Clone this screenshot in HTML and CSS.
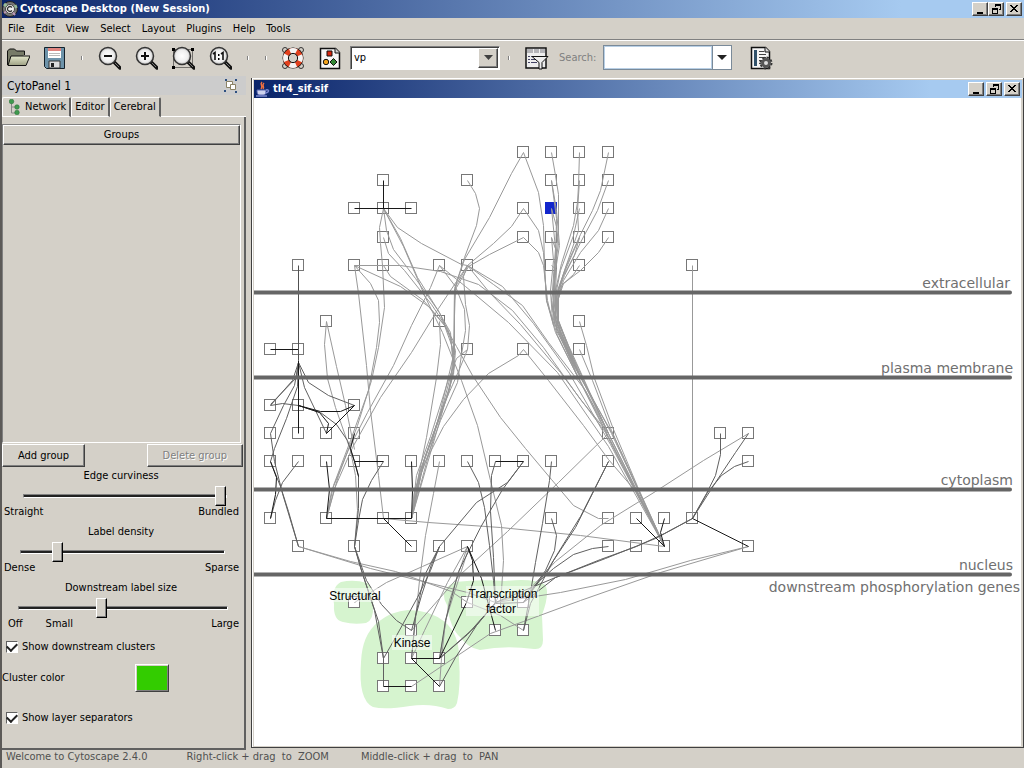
FILE: index.html
```html
<!DOCTYPE html>
<html lang="en">
<head>
<meta charset="utf-8">
<title>Cytoscape Desktop (New Session)</title>
<link rel="stylesheet" href="styles.css">
</head>
<body>
<svg class="defs" aria-hidden="true">
  <defs>
    <radialGradient id="glass"><stop offset="0" stop-color="#fff"/><stop offset=".7" stop-color="#eee"/><stop offset="1" stop-color="#bbb"/></radialGradient>
    <linearGradient id="folder" x2="0" y2="1"><stop offset="0" stop-color="#e4e8cc"/><stop offset="1" stop-color="#9da084"/></linearGradient>
    <g id="lens"><path d="M16 16l6 6" stroke="#111" stroke-width="3.500" stroke-linecap="round"/><path d="M17 17l4 4" stroke="#777" stroke-width="1"/><circle cx="10" cy="10" r="8.500" fill="url(#glass)" stroke="#333" stroke-width="1.500"/></g>
    <g id="min"><path d="M3 9h6v2H3z"/></g>
    <g id="restore"><path d="M5 1h6v6H9V6h1V3H6v1H5zM2 5h6v6H2zM3 7v3h4V7z" fill-rule="evenodd"/></g>
    <g id="close"><path d="M2 2h2v1h1v1h2V3h1V2h2v1H9v1H8v1H7v1h1v1h1v1h1v1H8V8H7V7H5v1H4v1H2V8h1V7h1V6h1V5H4V4H3V3H2z"/></g>
    <rect id="n" x="-5.500" y="-5.500" width="11" height="11"/>
  </defs>
</svg>
<div class="window">
  <header class="titlebar">
    <svg class="app-icon" width="16" height="16" viewBox="0 0 16 16"><circle cx="8" cy="8" r="7.500" fill="#777" stroke="#222"/><path d="M8 8L2 3M8 8l7-3" stroke="#9b9" stroke-width="3"/><path d="M8 8l5 6M8 8l-6 4" stroke="#b9b" stroke-width="2"/><circle cx="8" cy="8" r="4.500" fill="#eee" stroke="#444"/><path d="M10 6.500a2.500 2.500 0 1 0 0 3" fill="none" stroke="#333" stroke-width="1.300"/></svg>
    <h1>Cytoscape Desktop (New Session)</h1>
    <div class="controls">
      <button aria-label="Minimize"><svg width="12" height="12"><use href="#min"/></svg></button>
      <button aria-label="Restore"><svg width="12" height="12"><use href="#restore"/></svg></button>
      <button class="close" aria-label="Close"><svg width="12" height="12"><use href="#close"/></svg></button>
    </div>
  </header>
  <nav class="menu">
    <button>File</button><button>Edit</button><button>View</button><button>Select</button><button>Layout</button><button>Plugins</button><button>Help</button><button>Tools</button>
  </nav>
  <div class="toolbar">
    <button class="tool" aria-label="Open"><svg width="24" height="24" viewBox="0 0 24 24"><path d="M1.500 19V5l2-2h5l2 2h8v4" fill="#777b68" stroke="#111"/><path d="M2 19.500L5 10h19l-4 9.500z" fill="url(#folder)" stroke="#111"/></svg></button>
    <button class="tool" aria-label="Save"><svg width="24" height="24" viewBox="0 0 24 24"><path d="M1.500 1.500h20v21h-18l-2-2z" fill="#6d93aa" stroke="#14202a"/><path d="M5 2h13v10H5z" fill="#fff"/><path d="M5 2h13v3H5z" fill="#e0847f"/><path d="M6 7.500h11M6 9.500h11" stroke="#bbb"/><path d="M6 15h11v7H6z" fill="#ddd" stroke="#333"/><path d="M8 17h3v4H8z" fill="#222"/></svg></button>
    <i class="sep"></i>
    <button class="tool" aria-label="Zoom out"><svg width="24" height="24" viewBox="-1 0 24 24"><use href="#lens"/><path d="M6 10h8" stroke="#111" stroke-width="2"/></svg></button>
    <button class="tool" aria-label="Zoom in"><svg width="24" height="24" viewBox="-1 0 24 24"><use href="#lens"/><path d="M6 10h8M10 6v8" stroke="#111" stroke-width="2"/></svg></button>
    <button class="tool" aria-label="Zoom selected"><svg width="24" height="24" viewBox="-1 0 24 24"><path d="M1.500 3.500h19v18h-19z" fill="none" stroke="#111" stroke-dasharray="1 1"/><path d="M0 2h3v3H0zM19 2h3v3h-3zM0 20h3v3H0z"/><use href="#lens"/></svg></button>
    <button class="tool" aria-label="Zoom actual size"><svg width="24" height="24" viewBox="-1 0 24 24"><use href="#lens"/><path d="M4 8l2-1.500V14M12 8l2-1.500V14" fill="none" stroke="#111" stroke-width="1.600"/><path d="M9 8h1.500v2H9zM9 12h1.500v2H9z"/></svg></button>
    <i class="sep wide"></i>
    <i class="sep"></i>
    <button class="tool" aria-label="Help"><svg width="24" height="24" viewBox="0 0 24 24"><g fill="none" stroke="#333"><circle cx="4" cy="4" r="2.500"/><circle cx="20" cy="4" r="2.500"/><circle cx="4" cy="20" r="2.500"/><circle cx="20" cy="20" r="2.500"/></g><circle cx="12" cy="12" r="10.500" fill="#111"/><circle cx="12" cy="12" r="7.300" fill="none" stroke="#e2401d" stroke-width="5.200"/><circle cx="12" cy="12" r="7.300" fill="none" stroke="#f4f4f4" stroke-width="5.200" stroke-dasharray="6.470 5" stroke-dashoffset="3.230"/><circle cx="12" cy="12" r="4.600" fill="#d4d0c8" stroke="#111"/></svg></button>
    <button class="tool" aria-label="Visual mapper"><svg width="24" height="24" viewBox="0 0 24 24"><path d="M2.500 2.500h15l4 4v16h-19z" fill="#f6f6f6" stroke="#111" stroke-width="1.500"/><path d="M17 2v5h5" fill="#ccc" stroke="#111"/><path d="M9 5h5v5H9z" fill="#d8250c" stroke="#111"/><circle cx="8" cy="16" r="2.700" fill="#f0a21c" stroke="#111"/><path d="M15.500 12.500l3.500 3.500-3.500 3.500-3.500-3.500z" fill="#358a36" stroke="#111"/></svg></button>
    <div class="combo">
      <select aria-label="Visual style"><option>vp</option></select>
      <span class="drop"><svg width="9" height="5"><path d="M0 0h9L4.500 5z" fill="#404040"/></svg></span>
    </div>
    <i class="sep near"></i>
    <button class="tool" aria-label="Filter"><svg width="24" height="24" viewBox="0 0 24 24"><path d="M1 2h20v20H1z" fill="#eee" stroke="#111" stroke-width="1.500"/><path d="M2 3h18v4H2z" fill="#b4b4b8"/><path d="M8.500 3v4M14.500 3v4" stroke="#eee"/><path d="M3 10.500h2M3 13.500h2M3 16.500h2M6 10.500h4M6 13.500h4M6 16.500h6" stroke="#446"/><path d="M7 10.500h16l-6 6V23h-3v-6.500z" fill="#eee" stroke="#111"/></svg></button>
    <label class="search-label" for="search">Search:</label>
    <div class="search"><input id="search" type="text"><button aria-label="Search options"><svg width="10" height="5"><path d="M0 0h10L5 5z" fill="#222"/></svg></button></div>
    <button class="tool last" aria-label="Configure search"><svg width="24" height="24" viewBox="0 0 24 24"><path d="M1.500 1.500h14l4 4v17h-18z" fill="#f6f6f6" stroke="#111" stroke-width="1.500"/><path d="M4 4h3v16H4z" fill="#31526b"/><path d="M9 5.500h5M9 8.500h7M9 11.500h7M9 14.500h3M9 17.500h2" stroke="#444"/><path d="M15 1v5h5" fill="#ddd" stroke="#111"/><circle cx="16" cy="17" r="5.500" fill="none" stroke="#333" stroke-width="2" stroke-dasharray="2.300 2"/><circle cx="16" cy="17" r="3.500" fill="#ddd" stroke="#555" stroke-width="3"/></svg></button>
  </div>
  <div class="workspace">
    <aside class="panel">
      <div class="panel-head"><h2>CytoPanel 1</h2>
        <button aria-label="Float panel"><svg width="14" height="14" viewBox="0 0 14 14"><path d="M2.500 2.500h6v6h-6z" fill="#fff" stroke="#8b8265"/><path d="M6.500 5.500h5v5h-5z" fill="#fff" stroke="#8b8265"/><path d="M1 0h2v2H1zM11 0h2v2h-2zM0 11h2v2H0zM11 12h2v2h-2z" fill="#2d4f80"/></svg></button>
      </div>
      <div class="tabs" role="tablist">
        <button role="tab"><svg width="12" height="16" viewBox="0 0 12 16"><path d="M2.500 3v11h5M2.500 8h5" fill="none" stroke="#888"/><g fill="#3f9a4e" stroke="#246b35" stroke-width=".5"><circle cx="2.500" cy="2.500" r="2.300"/><circle cx="8" cy="8" r="2.300"/><circle cx="8" cy="13.500" r="2.300"/></g></svg>Network</button>
        <button role="tab">Editor</button>
        <button role="tab" class="active" aria-selected="true">Cerebral</button>
        <span class="tab-rest"></span>
      </div>
      <div class="tab-body">
        <table class="groups"><thead><tr><th>Groups</th></tr></thead><tbody><tr><td></td></tr></tbody></table>
        <div class="actions"><button>Add group</button><button disabled>Delete group</button></div>
        <div class="slider s1"><label for="curve">Edge curviness</label><input id="curve" type="range" value="100"><div class="ends"><span>Straight</span><span>Bundled</span></div></div>
        <div class="slider s2"><label for="density">Label density</label><input id="density" type="range" value="16"><div class="ends"><span>Dense</span><span>Sparse</span></div></div>
        <div class="slider s3"><label for="size">Downstream label size</label><input id="size" type="range" value="39"><div class="ends"><span>Off</span><span class="small">Small</span><span class="push">Large</span></div></div>
        <label class="check"><input type="checkbox" checked>Show downstream clusters</label>
        <div class="color-row"><label for="color">Cluster color</label><button id="color" class="swatch" aria-label="Cluster color"></button></div>
        <label class="check tall"><input type="checkbox" checked>Show layer separators</label>
      </div>
    </aside>
    <main class="frame">
      <div class="frame-title">
        <svg width="16" height="16" viewBox="0 0 16 16"><path d="M8 1c-3 3 2 3-1 7M10 2c-3 3 1 3-1 6" fill="none" stroke="#f07040" stroke-width="1.500"/><path d="M3 9h9c0 5-1 5-4.500 5S3 14 3 9z" fill="#cdd2ee" stroke="#5563ae"/><path d="M12 9c4-1 3 3-1 3M2 15h11" fill="none" stroke="#7e8ad0" stroke-width="1.500"/></svg>
        <h2>tlr4_sif.sif</h2>
        <div class="controls">
          <button aria-label="Minimize network"><svg width="12" height="12"><use href="#min"/></svg></button>
          <button aria-label="Restore network"><svg width="12" height="12"><use href="#restore"/></svg></button>
          <button aria-label="Close network"><svg width="12" height="12"><use href="#close"/></svg></button>
        </div>
      </div>
      <div class="canvas">
      <svg class="graph" role="img" aria-label="Network graph">
        <g transform="translate(-254 -98)">
          <g class="cluster">
            <path d="M341 582Q354 579 367 583Q375 588 373 606Q374 620 366 623Q354 625 343 622Q333 620 334 604Q331 587 341 582z"/>
            <path d="M408 610Q430 610 445 622Q460 635 459 660Q461 685 457 703Q455 709 448 709Q430 703 410 706Q385 710 373 707Q358 700 361 662Q362 635 378 622Q392 611 408 610z"/>
            <path d="M455 582Q480 579 505 581Q532 578 544 584Q551 590 542 615L543 640Q543 650 534 649Q505 645 480 650Q468 648 460 637Q450 628 447 605Q438 590 455 582z"/>
          </g>
          <g class="node">
            <use href="#n" x="523" y="152"/><use href="#n" x="551" y="152"/><use href="#n" x="579" y="152"/><use href="#n" x="608" y="152"/>
            <use href="#n" x="383" y="180"/><use href="#n" x="467" y="180"/><use href="#n" x="551" y="180"/><use href="#n" x="579" y="180"/><use href="#n" x="608" y="180"/>
            <use href="#n" x="354" y="208"/><use href="#n" x="383" y="208"/><use href="#n" x="411" y="208"/><use href="#n" x="523" y="208"/><use class="selected" href="#n" x="551" y="208"/><use href="#n" x="579" y="208"/><use href="#n" x="608" y="208"/>
            <use href="#n" x="383" y="237"/><use href="#n" x="523" y="237"/><use href="#n" x="551" y="237"/><use href="#n" x="579" y="237"/><use href="#n" x="608" y="237"/>
            <use href="#n" x="298" y="265"/><use href="#n" x="354" y="265"/><use href="#n" x="383" y="265"/><use href="#n" x="439" y="265"/><use href="#n" x="467" y="265"/><use href="#n" x="551" y="265"/><use href="#n" x="579" y="265"/><use href="#n" x="692" y="265"/>
            <use href="#n" x="326" y="321"/><use href="#n" x="439" y="321"/><use href="#n" x="579" y="321"/>
            <use href="#n" x="270" y="349"/><use href="#n" x="298" y="349"/><use href="#n" x="467" y="349"/><use href="#n" x="523" y="349"/><use href="#n" x="579" y="349"/>
            <use href="#n" x="270" y="405"/><use href="#n" x="298" y="405"/><use href="#n" x="354" y="405"/>
            <use href="#n" x="270" y="433"/><use href="#n" x="298" y="433"/><use href="#n" x="326" y="433"/><use href="#n" x="354" y="433"/><use href="#n" x="608" y="433"/><use href="#n" x="720" y="433"/><use href="#n" x="748" y="433"/>
            <use href="#n" x="270" y="461"/><use href="#n" x="298" y="461"/><use href="#n" x="326" y="461"/><use href="#n" x="354" y="461"/><use href="#n" x="383" y="461"/><use href="#n" x="411" y="461"/><use href="#n" x="439" y="461"/><use href="#n" x="467" y="461"/><use href="#n" x="495" y="461"/><use href="#n" x="523" y="461"/><use href="#n" x="551" y="461"/><use href="#n" x="608" y="461"/><use href="#n" x="748" y="461"/>
            <use href="#n" x="270" y="518"/><use href="#n" x="326" y="518"/><use href="#n" x="383" y="518"/><use href="#n" x="411" y="518"/><use href="#n" x="551" y="518"/><use href="#n" x="608" y="518"/><use href="#n" x="636" y="518"/><use href="#n" x="664" y="518"/><use href="#n" x="692" y="518"/>
            <use href="#n" x="298" y="546"/><use href="#n" x="354" y="546"/><use href="#n" x="411" y="546"/><use href="#n" x="439" y="546"/><use href="#n" x="467" y="546"/><use href="#n" x="608" y="546"/><use href="#n" x="636" y="546"/><use href="#n" x="664" y="546"/><use href="#n" x="748" y="546"/>
            <use href="#n" x="354" y="602"/><use href="#n" x="467" y="602"/><use href="#n" x="495" y="602"/><use href="#n" x="523" y="602"/>
            <use href="#n" x="411" y="630"/><use href="#n" x="495" y="630"/><use href="#n" x="523" y="630"/>
            <use href="#n" x="383" y="658"/><use href="#n" x="411" y="658"/><use href="#n" x="439" y="658"/><use href="#n" x="383" y="686"/><use href="#n" x="411" y="686"/><use href="#n" x="439" y="686"/>
          </g>
          <g transform="translate(.5 .5)">
          <g class="edge light">
            <path d="M467 180L475 193L479 208L476 225L464 257L456 282L454 300V335L451 372L441 410L420 470L411 518"/>
            <path d="M383 208L379 227L380 243L382 265L384 307L378 347L371 380L357 425L338 475L326 518"/>
            <path d="M383 208L386 230L393 249L415 278L439 312L450 338L454 365L448 393L422 465L411 518"/>
            <path d="M383 208L397 227L421 243L461 264L467 265"/>
            <path d="M383 208L403 246L425 297L442 332L461 380L477 425L490 480L501 525L503 560L501 590L495 602"/>
            <path d="M383 208L400 238L417 277L437 309L450 332L453 370L446 397L424 459L411 518"/>
            <path d="M383 237L388 253L404 270L431 304L447 328L455 350L453 374L444 404L411 518"/>
            <path d="M354 265L358 293L366 365L370 410L378 475L383 518"/>
            <path d="M354 265L370 283L378 300L379 322L376 347L368 390L350 440L333 485L326 518"/>
            <path d="M354 265L400 265L440 271L478 284L512 310L543 347L580 399L608 433L664 546"/>
            <path d="M354 265L400 286L428 306L444 325L452 347L453 370"/>
            <path d="M383 265L390 276L423 300L443 323L456 346L472 375L500 417L525 448L551 479L573 505L598 518H608"/>
            <path d="M439 265L430 287L411 325L393 365L367 412L348 449L331 491L326 518"/>
            <path d="M439 265L455 286L464 309L465 330L461 354L457 382L440 420L420 475L411 518"/>
            <path d="M439 265L465 286L508 322L557 372L608 446L664 546"/>
            <path d="M467 265L463 276L465 304L469 325L467 349"/>
            <path d="M467 265L455 286L454 315V355L449 388L424 458L411 518"/>
            <path d="M467 265L458 278L438 308L411 352L380 397L352 447L334 488L326 518"/>
            <path d="M467 265L493 284L522 305L548 342L585 390L608 433L664 546"/>
            <path d="M467 265L502 286L533 323L569 373L610 444L664 546"/>
            <path d="M467 265L489 292L520 324L560 372L605 432L664 546"/>
            <path d="M523 152L511 173L489 217L464 259L454 288L453 355L440 410L411 518"/>
            <path d="M523 208L511 226L493 243L467 265"/><path d="M523 237L489 254L468 266L456 287"/>
            <path d="M523 152L538 192L543 225L544 265L546 300L555 332L578 378L620 461L664 546"/>
            <path d="M523 208L538 230L543 252L546 300L557 335L578 378"/><path d="M523 237L538 252L543 265L547 300L553 325"/>
            <path d="M551 152L555 175L558 194V230L554 270L552 310L565 345L608 433"/>
            <path d="M551 180L556 210L559 245L555 270L553 310L567 345L608 433"/>
            <path d="M551 208L556 226L558 243L554 270L553 310L568 345L608 433"/>
            <path d="M551 237L556 251L555 275L551 300L554 320L575 370"/>
            <path d="M551 265L556 269L555 290L557 318L578 373"/>
            <path d="M551 237L553 260L550 290L552 320"/>
            <path d="M579 152L578 185L577 202L573 225L561 263L555 290L553 320L573 367L608 436L664 546"/>
            <path d="M579 180L577 210L578 230L565 267L556 295L554 323L574 367"/>
            <path d="M579 208L573 235L560 270L555 295V320L575 366L611 433L664 546"/>
            <path d="M579 237L574 255L562 277L557 299V323L578 373"/>
            <path d="M579 265L573 274L561 285L556 306L560 335L578 373"/>
            <path d="M608 152L600 190L592 210L580 234L566 265L557 290L555 320L577 372L613 435L664 546"/>
            <path d="M608 180L597 210L580 242L564 275L557 292L554 318"/>
            <path d="M608 208L598 230L580 252L563 280L557 300L556 330L578 373"/>
            <path d="M608 237L598 252L580 270L563 283L558 298V320L580 376"/>
            <path d="M551 180L556 218L555 260M551 208L555 248L552 290M579 237L563 274L555 300"/>
            <path d="M579 321L586 345L594 378L613 429L637 486L664 546"/><path d="M579 349L592 380L611 430L638 490L664 546"/>
            <path d="M326 321L324 344L327 378L335 407L350 450L355 475L357 510L354 546"/><path d="M326 321L336 366L345 405L354 449"/>
            <path d="M439 321L440 344L436 377L426 437L415 490L411 518"/>
            <path d="M467 349L456 358L447 382L430 436L416 475L411 518"/><path d="M467 349L458 371L442 407L419 472L411 518"/>
            <path d="M523 349L518 355L488 373L463 399L443 426L425 461L414 490L411 518"/>
            <path d="M523 349L548 380L583 425L608 459L638 494L664 546"/>
            <path d="M692 265V518"/>
            <path d="M383 518L428 522L500 527L580 535L664 546"/>
            <path d="M608 433L558 482L507 531L460 574L411 630"/><path d="M439 461L433 493L425 535L419 580L411 658"/>
            <path d="M748 433L703 460L655 491L600 525L555 561L525 593L495 602"/>
            <path d="M298 546L350 561L395 571L451 591L467 602L500 615L523 630"/><path d="M298 546L370 568L467 592L495 602"/>
            <path d="M748 546L690 560L625 579L560 592L495 602"/><path d="M748 546L660 572L580 600L523 621L490 633L411 686"/>
            <path d="M467 546L447 582L424 630L411 658M467 546L449 600L439 658M468 548L445 620L441 658L439 686M467 546L422 566L386 582L354 602"/>
          </g>
          <g class="edge mid">
            <path d="M298 362L292 380L270 405M298 362L294 385L283 405L270 433M298 362L297 386L286 418L274 448L270 461M298 362L308 382L328 395L354 405M298 362L304 387L326 433M298 362L296 377L270 404M270 405L282 403L298 405"/>
            <path d="M270 433L274 461L282 493L291 523L298 546M270 461L280 486L288 511L298 546M298 461L282 482L275 500L270 518"/>
            <path d="M383 461L371 480L362 499L358 520L354 546M354 461L358 475V508L354 546"/>
            <path d="M298 405L320 412L336 424L347 440L354 461"/>
            <path d="M354 546L360 567L374 610L383 658M354 546L362 573L378 621L383 658V686M354 546L366 580L381 604L396 620L411 630"/>
            <path d="M439 546L431 564L421 595L411 630M439 546L430 570L417 597L395 637L383 658M439 546L424 575L415 615L411 658"/>
            <path d="M467 461L478 482L484 507L489 545L493 580L495 602M495 461L491 475L490 511L493 557L495 602"/>
            <path d="M523 461L507 482L476 502L439 546M523 461L502 489L480 527L458 571L445 620L439 658"/>
            <path d="M551 461L549 480L542 523L535 562L530 592L523 630M608 461L592 493L575 527L553 560L530 603L523 630M608 461L580 516L548 568L523 602"/>
            <path d="M551 518L556 535L554 550L545 570L523 602M608 546L592 548L573 554L553 568L535 584L523 602M636 546L600 559L555 577L523 602M692 518L664 533L636 546M692 518L655 538L605 558L555 577L495 602"/>
            <path d="M720 433L720 454L715 475L706 493L692 518M748 433L735 452L715 482L692 518M748 461L734 466L721 475L707 492L692 518"/>
            <path d="M523 602L495 603L482 617L467 634L439 658M495 602L476 625L455 657L439 686M495 602L474 627L439 658"/>
          </g>
          <g class="edge dark">
            <path d="M383 180V208M354 208H411M270 349H298M298 360V433M298 405L320 411L340 411L354 405L326 433M298 405L319 412L328 423L326 433M354 433L350 448L354 461H383"/>
            <path class="soft" d="M298 265V360"/>
            <path d="M270 461L276 477L275 494L270 518M326 461L329 489L326 518H411L412 490L411 461M383 518L411 546M495 461H523M636 518L664 546L660 532L664 518M692 518L748 546"/>
            <path d="M354 461L358 476M467 546L472 560L473 580L466 602L439 658M467 546L481 578L495 630M411 658H439M411 658L439 686M383 686H411"/>
          </g>
          </g>
          <path class="layer" d="M250 292.500H1010M250 377.500H1010M250 489.500H1010M250 574.500H1010"/>
          <g class="layer-name" text-anchor="end"><text x="1010" y="288">extracellular</text><text x="1013" y="373">plasma membrane</text><text x="1013" y="485">cytoplasm</text><text x="1013" y="570">nucleus</text><text x="1020" y="592">downstream phosphorylation genes</text></g>
          <g class="label-back"><rect x="329" y="588" width="53" height="14"/><rect x="392" y="635" width="40" height="15"/><rect x="466" y="586" width="73" height="30"/></g>
          <g class="cluster-name" text-anchor="middle"><text x="355" y="600">Structural</text><text x="412" y="647">Kinase</text><text x="503" y="598">Transcription</text><text x="501" y="613">factor</text></g>
        </g>
      </svg>
      </div>
    </main>
  </div>
  <footer class="status"><span>Welcome to Cytoscape 2.4.0</span><span class="zoom-tip">Right-click + drag  to  ZOOM</span><span class="pan-tip">Middle-click + drag  to  PAN</span></footer>
</div>
</body>
</html>
```
FILE: styles.css
```css
* { box-sizing: border-box; }
body { margin: 0; background: #d4d0c8; color: #000; font: 11px/14px "DejaVu Sans Condensed", "DejaVu Sans", sans-serif; }
button, input, select { font: inherit; color: inherit; margin: 0; padding: 0; border: 0; background: none; }
h1, h2 { margin: 0; font-size: 11px; }
.defs { position: absolute; width: 0; height: 0; }
.window { height: 100vh; display: flex; flex-direction: column; border-left: 2px solid #5c5a58; overflow: hidden; }

.titlebar, .frame-title { display: flex; align-items: center; height: 18px; flex: none; color: #fff; background: linear-gradient(90deg, #0a246a, #a6caf0 88%); }
.titlebar h1, .frame-title h2 { flex: 1; margin-left: 2px; }
.controls { display: flex; padding-right: 2px; }
.controls button { width: 16px; height: 14px; display: grid; place-items: center; background: #d4d0c8; border: 1px solid; border-color: #fff #404040 #404040 #fff; box-shadow: inset -1px -1px #808080; }
.controls .close { margin-left: 2px; }
.controls svg { shape-rendering: crispEdges; }
.frame-title .controls { gap: 2px; }

.menu { display: flex; gap: 11px; height: 22px; flex: none; padding: 1px 6px 0; align-items: center; border-bottom: 1px solid #808080; box-shadow: 0 1px #fff; }
.toolbar { display: flex; align-items: center; height: 36px; flex: none; padding: 0 4px 1px; }
.tool { width: 24px; height: 24px; margin-right: 13px; flex: none; }
.tool svg { display: block; }
.sep { width: 2px; height: 4px; margin: 0 14px 0 1px; border-left: 1px solid #808080; border-right: 1px solid #fff; flex: none; }
.sep.wide { margin-left: 2px; margin-right: 15px; }
.sep.near { margin-left: 8px; margin-right: 15px; }
.combo { display: flex; width: 150px; height: 24px; margin-left: -5px; padding: 1px; border: 1px solid; border-color: #808080 #fff #fff #808080; background: #fff; box-shadow: inset 1px 1px #404040; }
.combo select { flex: 1; appearance: none; padding: 0 2px; outline: 0; }
.drop { width: 20px; display: grid; place-items: center; background: #d4d0c8; border: 1px solid; border-color: #fff #404040 #404040 #fff; box-shadow: inset -1px -1px #808080; }
.search-label { width: 44px; color: #808080; margin-left: -3px; }
.search { display: flex; width: 129px; height: 25px; border: 1px solid #7a8a99; background: #fff; }
.search input { flex: 1; min-width: 0; border: 1px solid #b8cfe5; background: #fff; }
.search button { width: 19px; border-left: 1px solid #7a8a99; display: grid; place-items: center; }
.last { margin-left: 18px; }

.workspace { flex: 1; min-height: 0; display: flex; }
.panel { width: 244px; flex: none; display: flex; flex-direction: column; }
.panel-head { display: flex; justify-content: space-between; align-items: center; height: 19px; padding: 0 8px 0 5px; background: #ccc; }
.panel-head h2 { font-size: 12px; font-weight: normal; }
.panel-head button, .panel-head svg { display: block; }
.tabs { display: flex; height: 22px; padding-top: 2px; }
.tabs button { display: flex; align-items: center; gap: 4px; padding: 0 3px; border: 1px solid #fff; border-right: 2px solid #606060; border-radius: 2px 2px 0 0; }
.tabs button:first-child { padding-left: 6px; }
.tabs .active { border-bottom-color: #d4d0c8; }
.tab-rest { flex: 1; border-bottom: 1px solid #fff; }
.tab-body { flex: 1; display: flex; flex-direction: column; padding-top: 7px; border-right: 2px solid #606060; border-bottom: 2px solid #606060; }
.groups { width: auto; flex: 1; display: flex; flex-direction: column; margin-right: 3px; border: 1px solid; border-color: #808080 #fff #fff #808080; border-spacing: 0; }
.groups thead, .groups tr, .groups th { display: block; }
.groups th { height: 20px; padding: 2px 0; font-weight: normal; border: 1px solid; border-color: #fff #404040 #404040 #fff; box-shadow: inset -1px -1px #808080; }
.actions { display: flex; justify-content: space-between; margin: 1px 1px 1px 0; }
.actions button { height: 23px; padding: 0 15px; border: 1px solid; border-color: #fff #404040 #404040 #fff; box-shadow: inset -1px -1px #808080; }
.actions button:disabled { color: #808080; text-shadow: 1px 1px #fff; }
.slider { display: flex; flex-direction: column; height: 56px; }
.slider label { line-height: 16px; margin-bottom: 2px; text-align: center; padding-right: 4px; }
.slider input { appearance: none; height: 20px; }
.s1 input { margin: 0 17px 0 21px; }
.s2 input { margin: 0 19px 0 18px; }
.s3 input { margin: 0 16px; }
.slider input::-webkit-slider-runnable-track { height: 4px; background: #222; border: 1px solid; border-color: #808080 #fff #fff #808080; }
.slider input::-webkit-slider-thumb { appearance: none; width: 11px; height: 20px; margin-top: -9px; background: #d4d0c8; border: 1px solid; border-color: #fff #000 #000 #fff; box-shadow: inset -1px -1px #808080; }
.ends { display: flex; justify-content: space-between; line-height: 12px; padding: 0 5px 0 2px; }
.s3 .ends { padding-left: 6px; }
.small { margin-left: 23px; }
.push { margin-left: auto; }
.check { display: flex; align-items: center; height: 22px; padding-left: 4px; gap: 4px; }
.check.tall { height: 40px; margin-bottom: 10px; }
.check input { appearance: none; width: 12px; height: 12px; border: 1px solid; border-color: #606060 #fff #fff #606060; background: #fff; display: grid; place-items: center; }
.check input:checked::before { content: ""; width: 8px; height: 5px; border-left: 2px solid #222; border-bottom: 2px solid #222; transform: rotate(-45deg) translate(1px, -1px); }
.color-row { display: flex; align-items: center; justify-content: space-between; height: 40px; padding-right: 75px; }
.swatch { width: 34px; height: 28px; background: #3c0; border: 1px solid; border-color: #fff #404040 #404040 #fff; box-shadow: inset 1px 1px #d4d0c8, inset -1px -1px #808080; }

.frame { flex: 1; min-width: 0; display: flex; flex-direction: column; margin: 2px 0 2px 5px; padding: 2px 1px 0 2px; border-left: 1px solid #404040; border-right: 1px solid #404040; border-bottom: 1px solid #404040; box-shadow: inset 1px 1px #fff; }
.frame-title { height: 18px; }
.frame-title h2 { margin-left: 3px; }
.canvas { flex: 1; min-height: 0; background: #fff; border: 1px solid #d4d0c8; border-width: 0 1px 1px 0; }
.graph { display: block; width: 100%; height: 100%; }
.cluster { fill: #d6f4cf; }
.node { fill: #fff; stroke: #777; }
.selected { fill: #1226cc; stroke: #1226cc; }
.edge { fill: none; stroke-width: 1; stroke-linejoin: round; }
.light { stroke: #999; }
.mid { stroke: #606060; }
.dark { stroke: #181818; }
.soft { stroke: #505050; }
.layer { fill: none; stroke: #666; stroke-width: 4; stroke-linecap: round; }
.layer-name { fill: #707070; font: 14px "DejaVu Sans", sans-serif; }
.label-back { fill: #fff; opacity: .5; }
.cluster-name { font: 12px "Liberation Sans", Arial, sans-serif; }
.status { display: flex; flex: none; height: 18px; padding-left: 4px; color: #505050; white-space: pre; }
.zoom-tip { margin-left: 39px; }
.pan-tip { margin-left: 32px; }
```
